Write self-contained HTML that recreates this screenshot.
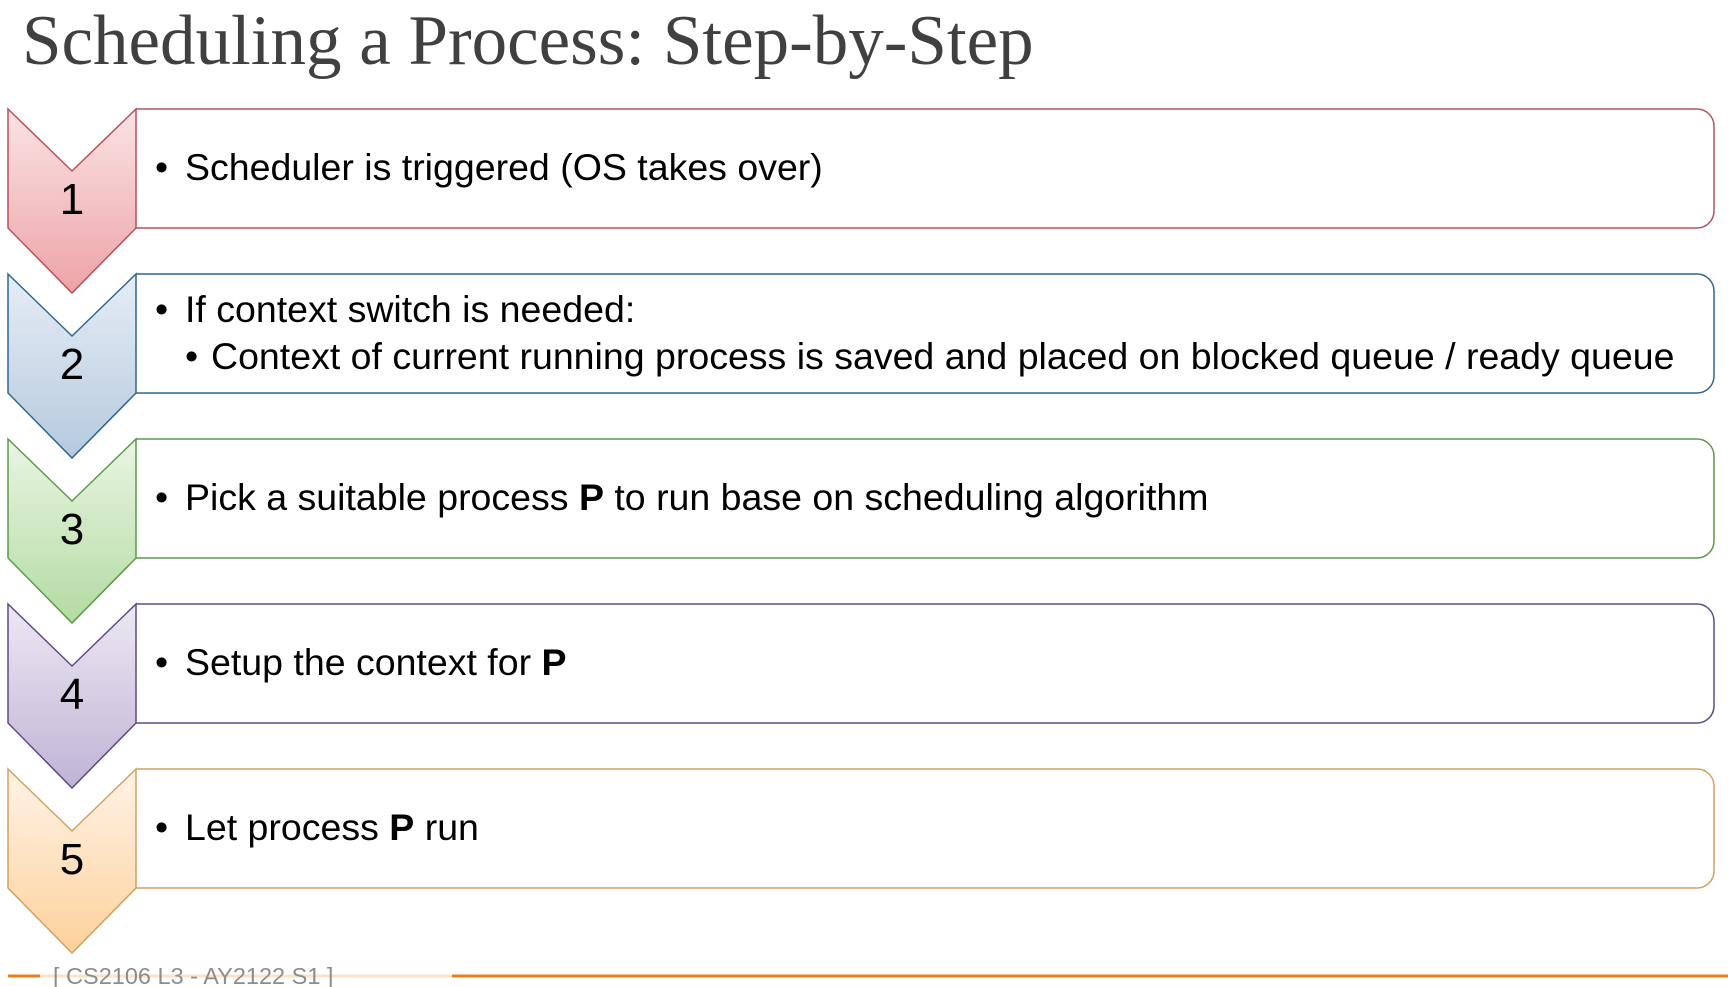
<!DOCTYPE html>
<html><head><meta charset="utf-8"><style>
body{margin:0;width:1728px;height:987px;background:#fff;overflow:hidden;font-family:"Liberation Sans",sans-serif}
svg{position:absolute;left:0;top:0}
</style></head><body>
<svg width="1728" height="987" viewBox="0 0 1728 987">
<defs>
<linearGradient id="g1" x1="0" y1="0" x2="0" y2="1"><stop offset="0" stop-color="#fbe3e4"/><stop offset="1" stop-color="#eca3a7"/></linearGradient>
<linearGradient id="g2" x1="0" y1="0" x2="0" y2="1"><stop offset="0" stop-color="#e6edf5"/><stop offset="1" stop-color="#b5c9de"/></linearGradient>
<linearGradient id="g3" x1="0" y1="0" x2="0" y2="1"><stop offset="0" stop-color="#e9f5e3"/><stop offset="1" stop-color="#b3dba2"/></linearGradient>
<linearGradient id="g4" x1="0" y1="0" x2="0" y2="1"><stop offset="0" stop-color="#ece8f3"/><stop offset="1" stop-color="#c0b3d5"/></linearGradient>
<linearGradient id="g5" x1="0" y1="0" x2="0" y2="1"><stop offset="0" stop-color="#fff3e6"/><stop offset="1" stop-color="#fdd19c"/></linearGradient>
</defs>
<text x="22" y="64" font-family="Liberation Serif,serif" font-size="71" fill="#404040">Scheduling a Process: Step-by-Step</text>

<g font-size="37.5" fill="#000">
<!-- 1 -->
<path d="M136 109 H1697 A17 17 0 0 1 1714 126 V211 A17 17 0 0 1 1697 228 H136" fill="none" stroke="#b9505a" stroke-width="1.5"/>
<path d="M8 109 L72 171 L136 109 V228 L72 293 L8 228 Z" fill="url(#g1)" stroke="#b9505a" stroke-width="1.5"/>
<text x="72" y="214" font-size="44" text-anchor="middle">1</text>
<text x="155" y="180">•</text><text x="185" y="180">Scheduler is triggered (OS takes over)</text>
<!-- 2 -->
<path d="M136 274 H1697 A17 17 0 0 1 1714 291 V376 A17 17 0 0 1 1697 393 H136" fill="none" stroke="#2f6690" stroke-width="1.5"/>
<path d="M8 274 L72 336 L136 274 V393 L72 458 L8 393 Z" fill="url(#g2)" stroke="#2f6690" stroke-width="1.5"/>
<text x="72" y="379" font-size="44" text-anchor="middle">2</text>
<text x="155" y="322">•</text><text x="185" y="322">If context switch is needed:</text>
<text x="185" y="369">•</text><text x="211" y="369">Context of current running process is saved and placed on blocked queue / ready queue</text>
<!-- 3 -->
<path d="M136 439 H1697 A17 17 0 0 1 1714 456 V541 A17 17 0 0 1 1697 558 H136" fill="none" stroke="#5a9a48" stroke-width="1.5"/>
<path d="M8 439 L72 501 L136 439 V558 L72 623 L8 558 Z" fill="url(#g3)" stroke="#5a9a48" stroke-width="1.5"/>
<text x="72" y="544" font-size="44" text-anchor="middle">3</text>
<text x="155" y="510">•</text><text x="185" y="510">Pick a suitable process <tspan font-weight="bold">P</tspan> to run base on scheduling algorithm</text>
<!-- 4 -->
<path d="M136 604 H1697 A17 17 0 0 1 1714 621 V706 A17 17 0 0 1 1697 723 H136" fill="none" stroke="#5f4a87" stroke-width="1.5"/>
<path d="M8 604 L72 666 L136 604 V723 L72 788 L8 723 Z" fill="url(#g4)" stroke="#5f4a87" stroke-width="1.5"/>
<text x="72" y="709" font-size="44" text-anchor="middle">4</text>
<text x="155" y="675">•</text><text x="185" y="675">Setup the context for <tspan font-weight="bold">P</tspan></text>
<!-- 5 -->
<path d="M136 769 H1697 A17 17 0 0 1 1714 786 V871 A17 17 0 0 1 1697 888 H136" fill="none" stroke="#d4a060" stroke-width="1.5"/>
<path d="M8 769 L72 831 L136 769 V888 L72 953 L8 888 Z" fill="url(#g5)" stroke="#d4a060" stroke-width="1.5"/>
<text x="72" y="874" font-size="44" text-anchor="middle">5</text>
<text x="155" y="840">•</text><text x="185" y="840">Let process <tspan font-weight="bold">P</tspan> run</text>
</g>

<line x1="8" y1="976" x2="40" y2="976" stroke="#ec7c1a" stroke-width="3"/>
<line x1="40" y1="976" x2="452" y2="976" stroke="#fbe1c8" stroke-width="3"/>
<line x1="452" y1="976" x2="1728" y2="976" stroke="#ec7c1a" stroke-width="3"/>
<text x="53" y="984" font-size="23.5" fill="#8c8c8c">[ CS2106 L3 - AY2122 S1 ]</text>
</svg>
</body></html>
